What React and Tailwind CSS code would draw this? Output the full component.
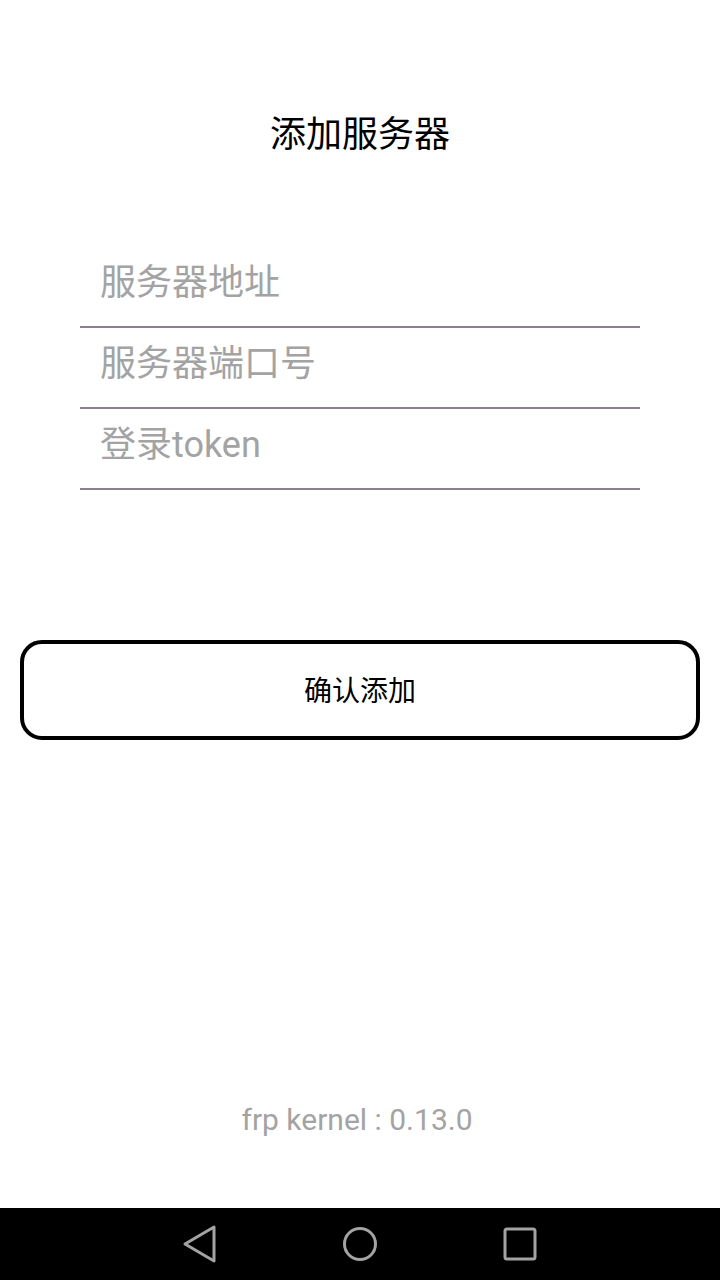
import React from 'react';

const FONT = { fontFamily: 'Roboto, "Noto Sans CJK SC", sans-serif' };

const Field = ({ hint }) => (
    <div className="h-[81px] border-b-2 border-[#8c7f8f]">
        <div className="pt-[12px] pl-[20px] text-[36px] leading-[48px] text-[#a3a3a3]">{hint}</div>
    </div>
);

const NavBar = () => (
    <div className="h-[72px] bg-black flex items-center justify-center gap-[120px]">
        <div className="w-[40px] h-[40px] flex items-center justify-center">
            <svg width="36" height="40" viewBox="0 0 36 40" fill="none" stroke="#a3a3a3" strokeWidth="3" strokeLinejoin="round">
                <path d="M32 3 L3 20 L32 37 Z" />
            </svg>
        </div>
        <div className="w-[40px] h-[40px] flex items-center justify-center">
            <svg width="36" height="36" viewBox="0 0 36 36" fill="none" stroke="#a3a3a3" strokeWidth="3">
                <circle cx="18" cy="18" r="15.5" />
            </svg>
        </div>
        <div className="w-[40px] h-[40px] flex items-center justify-center">
            <svg width="34" height="34" viewBox="0 0 34 34" fill="none" stroke="#a3a3a3" strokeWidth="3">
                <rect x="2" y="2" width="30" height="30" rx="2" />
            </svg>
        </div>
    </div>
);

export default function App() {
    return (
        <div className="h-[1280px] w-[720px] bg-white flex flex-col" style={FONT}>
            <h1 className="pt-[111px] text-center text-[36px] leading-[48px] text-black">添加服务器</h1>

            <div className="mt-[88px] mx-[80px]">
                <Field hint="服务器地址" />
                <Field hint="服务器端口号" />
                <Field hint="登录token" />
            </div>

            <button className="mt-[150px] mx-[20px] h-[100px] pt-[3px] border-4 border-black rounded-[22px] bg-white text-[28px] text-black">
                确认添加
            </button>

            <div className="flex-1" />

            <div className="mb-[68px] pr-[6px] text-center text-[30px] leading-[40px] text-[#a3a3a3]">frp kernel : 0.13.0</div>

            <NavBar />
        </div>
    );
}
